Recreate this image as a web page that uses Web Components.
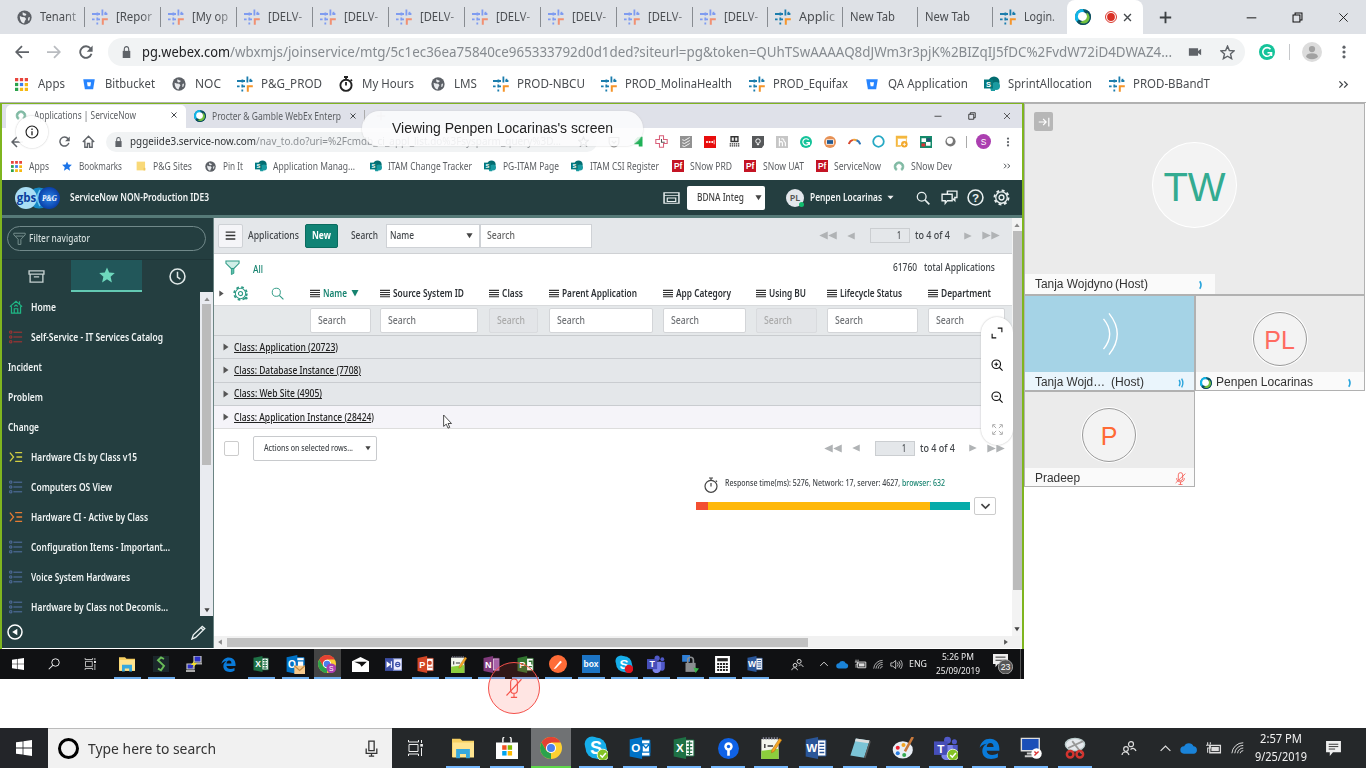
<!DOCTYPE html>
<html lang="en">
<head>
<meta charset="utf-8">
<title>Cisco Webex Meetings</title>
<style>
html,body{margin:0;padding:0;width:1366px;height:768px;overflow:hidden;background:#fff}
</style>
</head>
<body>
<meeting-page></meeting-page>
<script>
const BASE = `*{box-sizing:border-box}:host{display:block;font-family:"Noto Sans",sans-serif;color:#4a4d51}
.row{display:flex;align-items:center}.row>i{display:block;flex:none;font-style:normal;height:auto}
ui-icon{vertical-align:top}`;

/* text that occupies a fixed advance width */
customElements.define('ui-text', class extends HTMLElement {
  connectedCallback() {
    if (this.shadowRoot) return;
    const w = +this.getAttribute('w');
    this.attachShadow({mode:'open'}).innerHTML =
      `<style>:host{display:block;white-space:pre;width:${w}px;line-height:1.3}span{display:inline-block;transform-origin:0 50%;text-decoration:var(--deco,none);text-underline-offset:1px}</style><span><slot></slot></span>`;
    const s = this.shadowRoot.querySelector('span');
    const n = s.getBoundingClientRect().width;
    if (n && w) s.style.transform = `scaleX(${w / n})`;
  }
});

const office = (c, l, extra='') => `<path d="M8 2.2h7.2v11.6H8z" fill="#fff" stroke="${c}" stroke-width=".7"/>${extra}<path d="M0.5 1.8L9.5 0v16l-9-1.8z" fill="${c}"/><text x="5" y="11" font-size="8.5" font-weight="700" text-anchor="middle" fill="#fff">${l}</text>`;
const lines = c => `<path d="M10.5 4.5h3.5M10.5 6.8h3.5M10.5 9h3.5M10.5 11.3h3.5" stroke="${c}" stroke-width="1"/>`;
const snow = (a,b) => `<path d="M10.4.5v6M15.4 5h-3M5.4 3.6v2.8M0 5h8M0 10.3h2.6M5.3 8.5v3M5.3 13.5v2M5 10.3h3" stroke="${a}" stroke-width="1.8" fill="none"/><path d="M13.5 2.8v2.4" stroke="${a}" stroke-width="1.8"/><path d="M10.8 15.8v-5.6h5" fill="none" stroke="${b}" stroke-width="2"/>`;
const list = c => `<g fill="none" stroke="${c}"><path d="M5 2.5h10M5 8h10M5 13.5h10"/><path d="M.8 1.2h2.4v2.4H.8zM.8 6.8h2.4v2.4H.8zM.8 12.3h2.4v2.4H.8z" stroke-width=".9"/></g>`;
const slist = c => `<path d="M1 3l4.2 5L1 13M7 3h8M8.5 8H15M7 13h8" fill="none" stroke="${c}" stroke-width="1.5"/>`;
const wifi = `<g fill="none" stroke="#ddd" stroke-width="1.1"><path d="M1 14A13 13 0 0 1 14 2M4.3 14A9.7 9.7 0 0 1 14 5M7.5 14A6.6 6.6 0 0 1 14 8M10.5 14a3.6 3.6 0 0 1 3.5-3"/></g>`;
const chrome = `<circle cx="8" cy="8" r="8" fill="#fdd032"/><path d="M8 0a8 8 0 0 1 7 4H8L4.6 10 1.1 4A8 8 0 0 1 8 0z" fill="#e34133"/><path d="M1.1 4L4.6 10 8 12 8 16A8 8 0 0 1 1.1 4z" fill="#2ba24c"/><circle cx="8" cy="8" r="3.7" fill="#fff"/><circle cx="8" cy="8" r="2.9" fill="#4a80ee"/>`;
const skype = `<circle cx="5.4" cy="5.4" r="5" fill="#16aeea"/><circle cx="10.6" cy="10.6" r="5" fill="#16aeea"/><circle cx="8" cy="8" r="7" fill="#16aeea"/><text x="8" y="12.3" font-size="12" font-weight="700" text-anchor="middle" fill="#fff">S</text>`;
const teams = `<circle cx="9" cy="2.8" r="2.3" fill="#5059c9"/><circle cx="13.6" cy="3.8" r="1.7" fill="#5059c9"/><path d="M6 6h9.8v5a3 3 0 0 1-3 3z" fill="#5059c9"/><path d="M5 6h7.5v6a4 4 0 0 1-7.5 2z" fill="#7b83eb"/><path d="M0 3.6h9v9H0z" fill="#464eb8"/><text x="4.5" y="11" font-size="7.8" font-weight="700" text-anchor="middle" fill="#fff">T</text>`;
const check = `<circle cx="12.6" cy="12.6" r="3.8" fill="#84c225" stroke="#eef8d8" stroke-width=".6"/><path d="M10.8 12.7l1.4 1.4 2.4-2.8" fill="none" stroke="#fff" stroke-width="1"/>`;
const I = {
  globe:`<circle cx="8" cy="8" r="7.6" fill="#5c6066"/><path d="M3 6.5l2.5 1 2.8.2 1.4 1.8-1.2 2-1 2.8C5 14 3 11 3 6.5zM6 2.500c2 .5 2 1.500 4 1.700l-.6 1.600-2 .4L6 5zM12 8l1.800-.6-.6 3.400-1.600.6z" fill="#e8eaed"/>`,
  snow:snow('#1b7dad','#f5952b'), snowf:snow('#7f9cf0','#f19072'),
  webex:`<circle cx="8" cy="8" r="8" fill="#07596b"/><path d="M8 0A8 8 0 0 0 1.5 12.7L5 9.5 9 3z" fill="#11b5e8"/><path d="M12 1.2A8 8 0 0 1 8 16a8 8 0 0 1-5-1.7z" fill="#0c4a5c"/><path d="M12 3.5A6 6 0 0 1 5 13.5L9 11z" fill="#72c13f"/><circle cx="7.4" cy="7.4" r="4.5" fill="#fff"/>`,
  rec:`<circle cx="8" cy="8" r="7.3" fill="#fff" stroke="#d93025" stroke-width="1.3"/><circle cx="8" cy="8" r="5.2" fill="#d93025"/>`,
  x:`<path d="M3 3l10 10M13 3L3 13" stroke="#45494d" stroke-width="2" fill="none"/>`,
  xt:`<path d="M2 2l12 12M14 2L2 14" stroke="#111" stroke-width="1.3" fill="none"/>`,
  plus:`<path d="M8 1v14M1 8h14" stroke="#3c4043" stroke-width="2.3"/>`,
  plusf:`<path d="M8 1v14M1 8h14" stroke="#bbb" stroke-width="1.6"/>`,
  min:`<path d="M1 8.5h14" stroke="#111" stroke-width="1.4"/>`,
  rest:`<path d="M1.5 4.5h10v10h-10zM4.5 4.5v-3h10v10h-3" fill="none" stroke="#111" stroke-width="1.5"/>`,
  back:`<path d="M16 8H1.6M8 1.2L1.4 8 8 14.8" fill="none" stroke="#5f6368" stroke-width="2"/>`,
  fwd:`<path d="M0 8h14.4M8 1.2L14.6 8 8 14.8" fill="none" stroke="#b9bcc0" stroke-width="2"/>`,
  reload:`<path d="M13.2 4A6.6 6.6 0 1 0 14.3 10" fill="none" stroke="#5f6368" stroke-width="2.1"/><path d="M15.6.6v7H8.8z" fill="#5f6368"/>`,
  home:`<path d="M1 8.5L8 1.5l7 7M3.5 7v8h3.2v-4.6h2.6V15h3.2V7" fill="none" stroke="#5f6368" stroke-width="1.7"/>`,
  lock:`<path d="M2.5 6.5h11V16h-11z" fill="#5f6368"/><path d="M4.8 7V4a3.2 3.2 0 0 1 6.4 0v3" fill="none" stroke="#5f6368" stroke-width="1.7"/>`,
  cam:`<path d="M1 3h10.5v3.5L15 3.6v8.8l-3.5-3V13H1z" fill="#5f6368"/>`,
  star:`<path d="M8 1.2l2 4.7 5 .4-3.8 3.3 1.2 5L8 12l-4.4 2.6 1.2-5L1 6.3l5-.4z" fill="none" stroke="#5f6368" stroke-width="1.5"/>`,
  starb:`<path d="M8 .6l2.2 5 5.6.5-4.2 3.7 1.3 5.6L8 12.3l-4.9 3.1 1.3-5.6L.2 6.1l5.6-.5z" fill="#1a73e8"/>`,
  starg:`<path d="M8 .6l2.2 5 5.6.5-4.2 3.7 1.3 5.6L8 12.3l-4.9 3.1 1.3-5.6L.2 6.1l5.6-.5z" fill="#6ed8bd"/>`,
  gram:`<circle cx="8" cy="8" r="8" fill="#15c39a"/><path d="M11.5 5.3A4.3 4.3 0 1 0 12.3 9M8.5 8.8h4V12" fill="none" stroke="#fff" stroke-width="1.6"/>`,
  user:`<circle cx="8" cy="8" r="8" fill="#dcdcdc"/><circle cx="8" cy="5.6" r="2.5" fill="#a2a2a2"/><ellipse cx="8" cy="11.3" rx="4.6" ry="2.4" fill="#a2a2a2"/>`,
  dots:`<g fill="#5f6368"><circle cx="8" cy="2.5" r="1.8"/><circle cx="8" cy="8" r="1.8"/><circle cx="8" cy="13.5" r="1.8"/></g>`,
  apps:`<g><path d="M0 0h4v4H0zM6 0h4v4H6zM12 0h4v4h-4z" fill="#e8453c"/><path d="M0 6h4v4H0z" fill="#2ba24c"/><path d="M6 6h4v4H6z" fill="#3b7ded"/><path d="M12 6h4v4h-4zM6 12h4v4H6zM12 12h4v4h-4z" fill="#f5b912"/><path d="M0 12h4v4H0z" fill="#2ba24c"/></g>`,
  bit:`<path d="M.3 1.5h15.4L13.5 15h-11z" fill="#2684ff"/><path d="M5.3 5.5h5.4L9.8 11H6.2z" fill="#fff"/>`,
  watch:`<circle cx="8" cy="9.3" r="5.6" fill="none" stroke="#222" stroke-width="1.9"/><path d="M8 9.5V6M6 1h4M8 1v3M12.6 3.6l1.4 1.3" stroke="#222" stroke-width="1.8"/>`,
  watcht:`<circle cx="8" cy="9.3" r="6" fill="none" stroke="#444" stroke-width="1.2"/><path d="M8 9.5V6M6 1h4M8 1v2.5M12.8 3.6l1.2 1.1" stroke="#444" stroke-width="1.2"/>`,
  sp:`<circle cx="10" cy="6" r="5.5" fill="#036c70"/><circle cx="12" cy="10" r="4" fill="#1a9ba1"/><path d="M5 7h6v8H7z" fill="#1a9ba1"/><path d="M0 3.5h9v9H0z" fill="#03787c"/><text x="4.5" y="10.9" font-size="7.5" font-weight="700" text-anchor="middle" fill="#fff">S</text>`,
  more:`<path d="M2 3.5L6.5 8 2 12.5M9 3.5L13.5 8 9 12.5" fill="none" stroke="#45494d" stroke-width="1.9"/>`,
  fold:`<path d="M1 1h13.5v14H1z" fill="#f9d978"/><path d="M12 11h3v4h-3z" fill="#efc65c"/>`,
  pf:`<path d="M0 0h16v16H0z" fill="#c41424"/><text x="8" y="12.3" font-size="11" font-weight="700" text-anchor="middle" fill="#fff">Pf</text>`,
  ring:`<path d="M4 14a6.5 6.5 0 1 1 8 0l-1.5-2a4 4 0 1 0-5 0z" fill="#7db8a1" stroke="#7db8a1" stroke-width="1"/>`,
  pocket:`<path d="M1.5 2h13v6a6.5 6.5 0 0 1-13 0z" fill="none" stroke="#888" stroke-width="1.5"/><path d="M5 6.5l3 3 3-3" fill="none" stroke="#888" stroke-width="1.6"/>`,
  ever:`<path d="M9 1h5v13H9v-3H3V7z" fill="#1fb157"/><path d="M3 6l5-5v5z" fill="#1fb157"/>`,
  cross:`<path d="M5.5 1h5v4.5H15v5h-4.5V15h-5v-4.5H1v-5h4.5z" fill="#fff" stroke="#d9607a" stroke-width="1.3"/><path d="M8 5v4h4" stroke="#555" stroke-width="1.3" fill="none"/>`,
  todo:`<path d="M0 0h16v16H0z" fill="#929292"/><path d="M3 5l3 1 7-4M3 9l3 1 7-4M3 13l3 1 7-4" stroke="#fff" stroke-width="1.2" fill="none"/>`,
  last:`<path d="M0 0h16v16H0z" fill="#e80c0c"/><g fill="#fff"><circle cx="4" cy="8" r="1.4"/><circle cx="7.5" cy="8" r="1.4"/><circle cx="11" cy="8" r="1.4"/><path d="M13 5h1v6h-1z"/></g>`,
  film:`<path d="M2 0h12v9H2z" fill="#333"/><path d="M4 2h3v5H4zM9 2h3v5H9z" fill="#eee"/><path d="M1 11.500h14M1 14.500h14" stroke="#333" stroke-width="1.800" stroke-dasharray="2 1"/>`,
  bulb:`<path d="M0 0h16v12l-3 4H0z" fill="#56585a"/><circle cx="8" cy="6.8" r="3" fill="none" stroke="#fff" stroke-width="1.3"/><path d="M6.5 11.5h3" stroke="#fff" stroke-width="1.4"/>`,
  rh:`<path d="M0 0h16v16H0z" fill="#c6c6c6"/><path d="M4.500 2.500v11M4.500 9q2.500-3 4 0v4.500M7 4q4-1 3.500 2.500L12.500 9v4.500" fill="none" stroke="#fff" stroke-width="1.500"/>`,
  shot:`<circle cx="8" cy="8" r="8" fill="#e79155"/><path d="M3 4.5h10v7H3z" fill="#fff"/><path d="M4 5.5h8v5H4z" fill="#215a92"/>`,
  rain:`<path d="M1 11a7.5 7.5 0 0 1 5-5" stroke="#d7482f" stroke-width="2.5" fill="none"/><path d="M6 6a6 6 0 0 1 5 1" stroke="#f0a53a" stroke-width="2.5" fill="none"/><path d="M10.5 6.5a7 7 0 0 1 4.5 5" stroke="#2e77b8" stroke-width="2.5" fill="none"/>`,
  cring:`<circle cx="8" cy="8" r="6.5" fill="none" stroke="#27a9c4" stroke-width="2.2"/>`,
  note:`<path d="M1 1h14v3H1zM1 1h2v13H1zM1 13h6v1.5H1z" fill="#f4b73f"/><path d="M3 4h11v9H3z" fill="#fff" stroke="#f4b73f"/><circle cx="11.5" cy="11.5" r="4" fill="#f2a72a"/><path d="M11.5 9.5v4M9.5 11.5h4" stroke="#fff"/>`,
  tr:`<path d="M0 0h16v16H0z" fill="#158a6b"/><path d="M2 3h6v5H2zM8 8h6v5H8z" fill="#fff"/><path d="M9 3h5v4H9z" fill="#274f73"/><path d="M2 10h5v4H2z" fill="#d33"/>`,
  gray:`<circle cx="8" cy="8" r="7.4" fill="#777"/><circle cx="7" cy="7" r="4.5" fill="#fff"/>`,
  savatar:`<circle cx="8" cy="8" r="8" fill="#ab3fb0"/><text x="8" y="11.3" font-size="9" text-anchor="middle" fill="#fff">S</text>`,
  win:`<path d="M1 2h14v12H1z" fill="none" stroke="#e9f0f0" stroke-width="1.4"/><path d="M1 5h14M4 8h8v4H4z" stroke="#e9f0f0" stroke-width="1.1" fill="none"/>`,
  mag:`<circle cx="6.5" cy="6.5" r="5" fill="none" stroke="#e9f0f0" stroke-width="1.5"/><path d="M10.2 10.2L15.3 15.3" stroke="#e9f0f0" stroke-width="1.8"/>`,
  magg:`<circle cx="6.5" cy="6.5" r="5" fill="none" stroke="#2f9a85" stroke-width="1.2"/><path d="M10.2 10.2L15.3 15.3" stroke="#2f9a85" stroke-width="1.4"/>`,
  magl:`<circle cx="10" cy="6" r="5" fill="none" stroke="#eee" stroke-width="1.3"/><path d="M6.3 9.7L1 15" stroke="#eee" stroke-width="1.4"/>`,
  chat:`<path d="M6 5V2h9v6h-2v3l-2-2" fill="none" stroke="#e9f0f0" stroke-width="1.3"/><path d="M1 5h9.5v6H6l-2 2.5V11H1z" fill="#243e40" stroke="#e9f0f0" stroke-width="1.3"/>`,
  help:`<circle cx="8" cy="8" r="7" fill="none" stroke="#e9f0f0" stroke-width="1.5"/><text x="8" y="12" font-size="11" font-weight="700" text-anchor="middle" fill="#e9f0f0">?</text>`,
  gear:`<g fill="none" stroke="#e9f0f0"><circle cx="8" cy="8" r="6.6" stroke-width="1.8" stroke-dasharray="2.7 2.48"/><circle cx="8" cy="8" r="5.4" stroke-width="1.2"/><circle cx="8" cy="8" r="2.3" stroke-width="1.3"/></g>`,
  gearg:`<g fill="none" stroke="#2f9a85"><circle cx="8" cy="8" r="6.8" stroke-width="1.8" stroke-dasharray="2.8 2.54"/><circle cx="8" cy="8" r="5.5" stroke-width="1.1"/><circle cx="8" cy="8" r="2.2" stroke-width="1.2"/></g><circle cx="14" cy="13" r="1.5" fill="#2f9a85"/>`,
  filt:`<path d="M1 1.5h14v2L9.7 9v6.3H6.3V9L1 3.5z M3 5h10" fill="none" stroke="#78918f" stroke-width="1.2"/>`,
  filtg:`<path d="M1 1h14v2.5L9.5 9H6.5L1 3.5z" fill="#cfeee7" stroke="#2f9a85" stroke-width="1.1"/><path d="M6.8 9h2.6v5.2l-2.6 1.3z" fill="#5bc2ad" stroke="#2f9a85"/>`,
  arch:`<path d="M1 2h14v3.4H1zM2 5.4h12V14H2zM5.5 8.5h5" fill="none" stroke="#c4d0cf" stroke-width="1.3"/>`,
  clock:`<circle cx="8" cy="8" r="7" fill="none" stroke="#dfe8e7" stroke-width="1.5"/><path d="M8 3.5V8.5l2.7 2" fill="none" stroke="#dfe8e7" stroke-width="1.4"/>`,
  house:`<path d="M1 7.6L8 1.4l7 6.2M2.8 7v8h10.4V7M6 15v-5h4v5M6 7.5L8 5.7l2 1.8M12 4.5V1.5" fill="none" stroke="#1fb684" stroke-width="1.4"/>`,
  lr:list('#c9302f'), lb:list('#5d7bb8'), sy:slist('#d3cf42'), so:slist('#e57c33'),
  left:`<circle cx="8" cy="8" r="7" fill="none" stroke="#fff" stroke-width="1.5"/><path d="M10.3 4.8v6.4L5.2 8z" fill="#fff"/>`,
  pen:`<path d="M1 15l1.5-4.5L12 1.5l2.7 2.3L5 13.3z M10.5 3l2.6 2.4" fill="none" stroke="#e9f0f0" stroke-width="1.4"/>`,
  burger:`<path d="M0 2.4h16M0 6.2h16M0 10h16M0 13.8h16" stroke="#333" stroke-width="2"/>`,
  burger3:`<path d="M1 3h14M1 8h14M1 13h14" stroke="#333" stroke-width="2"/>`,
  tl:`<path d="M15.500 1v14L.5 8z" fill="#b0b3b5"/>`, tr2:`<path d="M.5 1v14L15.500 8z" fill="#b0b3b5"/>`,
  tdk:`<path d="M3 1v14L13 8z" fill="#555"/>`, tldk:`<path d="M13 1v14L3 8z" fill="#888"/>`,
  dn:`<path d="M1 3h14L8 14z" fill="#444"/>`, dng:`<path d="M1 2h14L8 15z" fill="#16836f"/>`, dnw:`<path d="M1 4h14L8 12z" fill="#eee"/>`,
  up:`<path d="M1 13h14L8 4z" fill="#888"/>`,
  chev:`<path d="M3 5l5 5 5-5" fill="none" stroke="#444" stroke-width="2"/>`,
  ex:`<path d="M9 1.500H14.500V7M1.500 9V14.500H7" fill="none" stroke="#111" stroke-width="1.5"/>`,
  zin:`<circle cx="7" cy="7" r="5.7" fill="none" stroke="#111" stroke-width="1.5"/><path d="M4.5 7h5M7 4.5v5M11 11l4.500 4.500" stroke="#111" stroke-width="1.5"/>`,
  zout:`<circle cx="7" cy="7" r="5.7" fill="none" stroke="#111" stroke-width="1.5"/><path d="M4.5 7h5M11 11l4.500 4.500" stroke="#111" stroke-width="1.5"/>`,
  full:`<path d="M1 5V1h4M11 1h4v4M15 11v4h-4M5 15H1v-4M2 2l4 4M14 2l-4 4M14 14l-4-4M2 14l4-4" fill="none" stroke="#999" stroke-width="1.2"/>`,
  info:`<circle cx="8" cy="8" r="6.8" fill="none" stroke="#222" stroke-width="1.3"/><path d="M8 7v4.6M8 4v1.7" stroke="#222" stroke-width="1.5"/>`,
  start:`<path d="M0 2.3L6.6 1.4v6.2H0zM7.4 1.3L16 0v7.6H7.4zM0 8.4h6.6v6.2L0 13.7zM7.4 8.4H16V16l-8.6-1.3z" fill="#fff"/>`,
  task:`<path d="M2 4.5h9v7H2zM1.5 0v2h10V0M1.5 16v-2h10v2" fill="none" stroke="#eee" stroke-width="1"/><path d="M14.5 0v3M14.5 8v8" stroke="#eee" stroke-width="1"/><path d="M13.3 4h2.6v2.6h-2.6z" fill="#eee"/>`,
  files:`<path d="M0 1.2h6l1.5 1.6H16v12H0z" fill="#f6cf62"/><path d="M.5 4H16v10.8H.5z" fill="#ffe48f"/><path d="M3 15.4V8.7h10v6.7h-2.8v-3H5.8v3z" fill="#37a8dd"/>`,
  sS:`<path d="M0 0h16v16H0z" fill="#1b272b"/><path d="M11 3L8 1.5 5 4.2l6 5.6-3 4.5-3-1.6" fill="none" stroke="#69bd58" stroke-width="1.9"/>`,
  putty:`<path d="M8 0h7v6H8zM1 8h7v5H1z" fill="#2c30c8" stroke="#c5c5c5" stroke-width="1.2"/><path d="M7 7.5h9M0 15h9" stroke="#aaa" stroke-width="1.8"/><path d="M9 4l-4 5h3l-2 4 5-6H8z" fill="#f6e22a"/>`,
  edge:`<path fill-rule="evenodd" d="M.5 7.500C1.300 3 4.400 .5 8.300 .5c4.600 0 7.200 3.200 7.200 7.600v1.600H5.800c.2 2.200 2 3.200 4.300 3.200 1.600 0 3-.4 4.300-1.200v3c-1.500 .9-3.300 1.300-5.200 1.300-4.100 0-6.700-2.400-6.700-6.100 0-2.500 1.300-4.500 3.400-5.600C3.600 4.600 1.600 5.600 .5 7.500zM5.900 6.800h5.200c0-1.900-.8-3-2.500-3-1.500 0-2.500 1.200-2.700 3z" fill="#0a7bd9"/>`,
  excel:office('#1e7145','X',`<path d="M10 4.5h4M10 7h4M10 9.5h4M10 12h4M12 3v10" stroke="#1e7145" stroke-width=".9"/>`),
  word:office('#2a5699','W',lines('#2a5699')), ppt:office('#d24625','P',`<circle cx="12" cy="6.5" r="2" fill="#d24625"/><path d="M10.5 10.5h4" stroke="#d24625"/>`),
  one:office('#80397b','N',`<path d="M10 3h5v10h-5z" fill="#a864a8"/>`), proj:office('#31752f','P',`<path d="M11 5h3v3M11 10h3" stroke="#31752f" stroke-width="1.3" fill="none"/>`),
  out:office('#0072c6','O',`<path d="M9.5 5h5.5v6H9.5zM9.5 5l2.8 3L15 5" fill="#fff" stroke="#0072c6"/>`),
  outm:office('#0072c6','O',`<path d="M9.5 5h5.5v6H9.5z" fill="#fff" stroke="#0072c6"/>`)+`<path d="M7 9h9v7H7z" fill="#f6c98b"/><path d="M7 9l4.5 4L16 9" fill="none" stroke="#c58b44"/>`,
  chrome, chromes:chrome+`<circle cx="11.8" cy="11.8" r="4.3" fill="#ab3fb0"/><text x="11.8" y="14" font-size="6" text-anchor="middle" fill="#fff">S</text>`,
  mail:`<path d="M0 5l8-4 8 4v10H0z" fill="#fff"/><path d="M2 5.5h12L9 10l-1.5-2.2z" fill="#111"/>`,
  mb:`<path d="M0 2h8v12H0z" fill="#3e50a8"/><path d="M8 2.5h8v11H8z" fill="#eef" stroke="#7080c0"/><path d="M1.500 5l4 3-4 3zM5.500 5h1v6h-1z" fill="#fff"/><circle cx="12" cy="8" r="2" fill="none" stroke="#3e50a8"/><path d="M10 8h4" stroke="#3e50a8"/>`,
  npp:`<path d="M1 1.5h12.5V16H1z" fill="#f4f7ee"/><path d="M1 10l12.5-1.5V16H1z" fill="#8ccf3d"/><path d="M3.5 5v3M5.5 6.5h4" stroke="#333" stroke-width="1"/><path d="M2 1h11" stroke="#889" stroke-width="1.5" stroke-dasharray="1 1"/><path d="M14.2 1l1.6 1.2-5.5 8.3-2 1 .4-2.2z" fill="#f5a623" stroke="#a86a10" stroke-width=".4"/>`,
  postman:`<circle cx="8" cy="8" r="8" fill="#ff6c37"/><path d="M4 12.5l6-7.5 1.5 1.3L6 12z" fill="#fff"/>`,
  box:`<path d="M0 0h16v16H0z" fill="#1c74c4"/><text x="8" y="10.8" font-size="7.5" font-weight="700" text-anchor="middle" fill="#fff">box</text>`,
  skyper:skype+`<circle cx="12.4" cy="12.4" r="3.8" fill="#e1141f"/>`, skypeg:skype+check, teams, teamsg:teams+check,
  lockg:`<path d="M1 0h7v6H1z" fill="#2f7fd6"/><path d="M4 7h9v8H4z" fill="#8b8e90"/><path d="M6 7V4.5a2.5 2.5 0 0 1 5 0V7" fill="none" stroke="#8b8e90" stroke-width="1.5"/><path d="M11 11l5 1-3 4z" fill="#3ab54a"/>`,
  calc:`<path d="M1 0h14v16H1z" fill="#fff"/><path d="M3 2h10v3H3z" fill="#222"/><path d="M3 7.5h10M3 10.3h10M3 13.2h10" stroke="#222" stroke-width="1.8" stroke-dasharray="1.9 .8"/>`,
  person:`<circle cx="10" cy="4.2" r="2.5" fill="none" stroke="#ddd" stroke-width="1.2"/><path d="M9.5 9.5C12 7.5 14 8.5 15 11M1 15c.5-4 6-4 7 0" fill="none" stroke="#ddd" stroke-width="1.2"/><circle cx="5" cy="9" r="2.3" fill="none" stroke="#ddd" stroke-width="1.2"/>`,
  caret:`<path d="M2 11l6-6 6 6" fill="none" stroke="#ddd" stroke-width="1.5"/>`,
  cloud:`<path d="M3.5 13a3.3 3.3 0 0 1 .2-6.6A4.5 4.5 0 0 1 12 6.5 3.3 3.3 0 0 1 12.5 13z" fill="#1a83d8"/>`,
  batt:`<path d="M4.5 5h10v7h-10z" fill="none" stroke="#ddd" stroke-width="1.2"/><path d="M6 6.5h7v4H6z" fill="#ddd"/><path d="M2.5 2v3M5 2v2M1 5h4v2.5H2.5V12" stroke="#ddd" fill="none"/>`, wifi,
  vol:`<path d="M1 6h2.5L7 3v10L3.5 10H1z" fill="none" stroke="#ddd"/><path d="M9 5.5q2 2.5 0 5M11 4q3 4 0 8M13 2.5q4 5.5 0 11" fill="none" stroke="#ddd"/>`,
  notif:`<path d="M1 1h14v10.5H7.5L4.5 15v-3.5H1z" fill="#eee"/><path d="M3.5 4h9M3.5 6.2h9M3.5 8.5h6" stroke="#333" stroke-width=".9"/>`,
  n23:`<path d="M0 0h12v8H4L2 10.5V8H0z" fill="#eee"/><path d="M2 2.5h8M2 5h8" stroke="#333" stroke-width=".8"/><circle cx="10" cy="10.3" r="5.7" fill="#555" stroke="#aaa" stroke-width=".7"/><text x="10" y="13" font-size="7" text-anchor="middle" fill="#fff">23</text>`,
  store:`<path d="M0 4h16v12H0z" fill="#fff"/><path d="M5 4V1.5a3 2.2 0 0 1 6 0V4" fill="none" stroke="#fff" stroke-width="1"/><path d="M4.5 6h3.2v3.3H4.5z" fill="#f25022"/><path d="M8.5 6h3.2v3.3H8.5z" fill="#7fba00"/><path d="M4.5 10.2h3.2v3.3H4.5z" fill="#00a4ef"/><path d="M8.5 10.2h3.2v3.3H8.5z" fill="#ffb900"/>`,
  maps:`<circle cx="8" cy="8" r="8" fill="#0f62e6"/><circle cx="8" cy="6.5" r="3.2" fill="#fff"/><circle cx="8" cy="6.5" r="1.3" fill="#0f62e6"/><path d="M7 9h2v4.5H7z" fill="#fff"/>`,
  npad:`<path d="M5 1l10 1.5L11 15 1 13.5z" fill="#7cc4d6"/><path d="M5 1l10 1.5-.7 2L4.3 3z" fill="#ddd"/><path d="M15 2.5l.8 1L12 15.500 11 15z" fill="#5a5a5a"/>`,
  paint:`<ellipse cx="7.5" cy="9" rx="7" ry="6" fill="#e9eef5"/><circle cx="4" cy="7.5" r="1.4" fill="#e23"/><circle cx="8" cy="5.5" r="1.4" fill="#f5a623"/><circle cx="4" cy="11.3" r="1.4" fill="#2a7de1"/><circle cx="8.5" cy="12.5" r="1.4" fill="#36a852"/><path d="M14.5 0L9 10" stroke="#c9793b" stroke-width="1.8"/>`,
  rdp:`<path d="M1 1h13v9H1z" fill="#1c4fb8" stroke="#ddd"/><path d="M5 12h5M3.5 14h8" stroke="#ccc" stroke-width="1.3"/><circle cx="12" cy="12" r="3.8" fill="#fff"/><path d="M10.5 10.5l1.5 1.5-1.5 1.5M13.5 10.5L12 12" stroke="#d33" fill="none"/>`,
  snip:`<ellipse cx="8" cy="5.5" rx="7" ry="4.5" fill="#e6e9ee" stroke="#bcc"/><path d="M3 8l11-5M6 3l7 9" stroke="#999" stroke-width="1.3"/><circle cx="4.5" cy="12.5" r="2.4" fill="none" stroke="#d3342f" stroke-width="1.8"/><circle cx="11.5" cy="12.5" r="2.4" fill="none" stroke="#d3342f" stroke-width="1.8"/>`,
  mic:`<path d="M5.5 1h5v9h-5z" fill="none" stroke="#333" stroke-width="1.2"/><path d="M3 8v4.5h10V8M8 12.5V15M5.5 15.2h5" fill="none" stroke="#333" stroke-width="1.2"/>`,
  muted:`<rect x="5.3" y=".8" width="5.4" height="9.8" rx="2.7" fill="none" stroke="#f5534a"/><path d="M3.3 7.5c0 3 1.5 4.7 4.7 4.7s4.7-1.7 4.7-4.7M8 12.2v3.2M5.5 15.5h5M14 2L2 13.5" fill="none" stroke="#f5534a"/>`,
  mutebig:`<rect x="5.3" y=".8" width="5.4" height="11.400" rx="2.7" fill="none" stroke="#f5534a" stroke-width=".9"/><path d="M8 12.200v3.200M5.500 15.500h5M14 1L2 14" fill="none" stroke="#f5534a" stroke-width=".9"/>`,
  cap:`<path d="M2 8h8M7 4.5L10.5 8 7 11.5M13.5 3v10" fill="none" stroke="#fff" stroke-width="1.3"/>`,
  wave1:`<path d="M6 2q4 6 0 12" fill="none" stroke="#2aa5dc" stroke-width="2.600"/>`,
  wave2:`<path d="M5 3q3 5 0 10M9 1q4 7 0 14" fill="none" stroke="#2aa5dc" stroke-width="2.200"/>`,
  speak:`<path d="M6 2.500q4.500 5.500 0 11M8 .5q6 7.500 0 15" fill="none" stroke="#fff" stroke-width=".5"/>`,
  arrow:`<path d="M3 0v13l3-2.6 2 4.6 2-.9L8 9.7h4z" fill="#fff" stroke="#222" stroke-width=".9"/>`
};
customElements.define('ui-icon', class extends HTMLElement {
  connectedCallback() {
    if (this.shadowRoot) return;
    const s = this.getAttribute('s') || 16, h = this.getAttribute('h') || s;
    this.attachShadow({mode:'open'}).innerHTML =
      `<style>:host{display:block;flex:none;width:${s}px;height:${h}px}svg{display:block;font-family:"Liberation Sans",sans-serif}</style><svg width="${s}" height="${h}" viewBox="0 0 16 16" ${h!==s?'preserveAspectRatio="none"':''}>${I[this.getAttribute('n')]||''}</svg>`;
  }
});
const ic = (n,s=16,h) => `<ui-icon n="${n}" s="${s}" ${h?`h="${h}"`:''}></ui-icon>`;
const tx = (w,t,c='') => `<ui-text w="${w}" class="${c}">${t}</ui-text>`;
/* flex row; every cell runs up to the start of the next one */
const row = (x0, items, cls='') => {
  const lead = items[0][0]-x0;
  return `<div class="row ${cls}" style="padding-left:${Math.max(0,lead)}px">` + items.map((it,i) => {
    const w = i < items.length-1 ? `width:${items[i+1][0]-it[0]}px` : '';
    return `<i style="${w}">${it[1]}</i>`;
  }).join('') + '</div>';
};
const at = (cx,n,s,h) => [cx-s/2, ic(n,s,h)];
const def = (name, css, html) => customElements.define(name, class extends HTMLElement {
  connectedCallback() {
    if (this.shadowRoot) return;
    this.attachShadow({mode:'open'}).innerHTML = `<style>${BASE}${css}</style>` + (typeof html === 'function' ? html(this) : html);
  }
});

/* ---------- outer browser ---------- */
const sep = '<b class="sep"></b>';
const fade = (w,t) => `<div class="fade">${tx(w,t)}</div>`;
let tabs = [[17,ic('globe',15)],[40,fade(36,'Tenant')]];
['[Repor','[My op','[DELV-','[DELV-','[DELV-','[DELV-','[DELV-','[DELV-','[DELV-'].forEach((t,i)=>{
  const x = 84+76*i;
  tabs.push([x,sep],[x+8,ic('snowf',16)],[x+32,fade(i>1?34:36,t)]);
});
tabs.push([767,sep],[775,ic('snow',16)],[799,fade(36,'Applic')],[842,sep],[850,tx(45,'New Tab')],[917,sep],[925,tx(45,'New Tab')],[992,sep],[1000,ic('snow',16)],[1024,fade(31,'Login.')],
 [1067,`<div class="active">${row(0,[[8,ic('webex',16)],[37.5,ic('rec',12)],[54.5,ic('x',11)]])}</div>`],[1158.5,ic('plus',13)],[1246,ic('min',11)],[1292,ic('rest',11)],[1338,ic('xt',11)]);
def('browser-tabs', `:host{height:34px;background:#dee1e6;font-size:12px}:host>.row{height:34px}.sep{display:block;width:1px;height:20px;background:#888c91}
.fade{-webkit-mask-image:linear-gradient(90deg,#000 55%,rgba(0,0,0,.15));}
.active{background:#fff;width:76px;height:34px;border-radius:8px 8px 0 0;display:flex;align-items:center}`, row(0,tabs));
def('browser-address', `:host{height:36px;background:#fff;font-size:14px}:host>.row{height:36px}.omni{width:1137px;height:28px;border-radius:14px;background:#f1f3f4}.omni .row{height:28px}.d{color:#202124}.p{color:#868b90}.v{display:block;width:1px;height:16px;background:#c6c8cb}`,
 row(0,[[15,ic('back',14)],[47,ic('fwd',14)],[79,ic('reload',14)],[108,`<div class="omni">${row(108,[[120.5,ic('lock',11,12)],[142,tx(88,'pg.webex.com','d')],[230,tx(942,'/wbxmjs/joinservice/mtg/5c1ec36ea75840ce965333792d0d1ded?siteurl=pg&amp;token=QUhTSwAAAAQ8dJWm3r3pjK%2BIZqIJ5fDC%2FvdW72iD4DWAZ4...','p')],[1188,ic('cam',14,12)],[1220,ic('star',15)]])}</div>`],[1259,ic('gram',16)],[1289,'<b class="v"></b>'],[1302,ic('user',20)],[1337,ic('dots',14)]]));
def('browser-bookmarks', `:host{height:32px;background:#fff;font-size:12px}:host>.row{height:28px}`,
 row(0,[[15,ic('apps',13)],[38,tx(27,'Apps')],[83,ic('bit',12)],[105,tx(50,'Bitbucket')],[172,ic('globe',14)],[195,tx(26,'NOC')],[237,ic('snow',16)],[261,tx(61,'P&amp;G_PROD')],[338,ic('watch',16)],[362,tx(52,'My Hours')],[431,ic('globe',14)],[454,tx(23,'LMS')],[493,ic('snow',16)],[517,tx(68,'PROD-NBCU')],[601,ic('snow',16)],[625,tx(107,'PROD_MolinaHealth')],[749,ic('snow',16)],[773,tx(75,'PROD_Equifax')],[866,ic('bit',12)],[888,tx(80,'QA Application')],[984,ic('sp',16)],[1008,tx(84,'SprintAllocation')],[1109,ic('snow',16)],[1133,tx(77,'PROD-BBandT')],[1338,ic('more',11)]]));

/* ---------- shared desktop: browser ---------- */
def('shared-browser', `:host{height:76px;background:#fff;color:#5c5f63}.tabs{height:24px;background:#dfe1e9}.tabs .row{height:22px}.act{background:#fff;width:180px;height:23px;border-radius:5px 5px 0 0;margin-top:1px}.act .row{height:20px}
.addr{height:27px}.omni{width:491px;height:20px;border-radius:10px;background:#f1f3f4}.omni .row{height:20px}.bm{height:25px;padding-bottom:3px}.d{color:#303336}.p{color:#8d9195}.v{display:block;width:1px;height:12px;background:#aaa}ui-text{font-size:10px}`,
 row(2,[[6,`<div class="act">${row(6,[[15,ic('ring',12)],[34,tx(102,'Applications | ServiceNow')],[170,ic('x',8)]])}</div>`],[194,ic('webex',12)],[212,tx(129,'Procter &amp; Gamble WebEx Enterp')],[349,ic('x',8)],[364,'<b class="v"></b>'],[376,ic('plusf',10)],[934,ic('min',8)],[968,ic('rest',8)],[1003,ic('xt',8)]],'tabs') +
 row(2,[at(17,'back',12),at(64,'reload',11),at(88,'home',13),[106,`<div class="omni">${row(106,[[113.5,ic('lock',9,10)],[130,tx(126,'pggeiide3.service-now.com','d')],[256,tx(305,'/nav_to.do?uri=%2Fcmdb_ci_appl_list.do%3Fsysparm_query%3D...','p')],[578,ic('star',11)]])}</div>`],
  at(614,'pocket',12),at(638,'ever',12),at(661.5,'cross',13),at(685.5,'todo',12),at(710,'last',12),at(734,'film',11),at(758,'bulb',12),at(782,'rh',12),at(806,'gram',12),at(830,'shot',12),at(854,'rain',13),at(878,'cring',13),at(901.5,'note',13),at(926,'tr',12),at(950,'gray',11),[966,'<b class="v"></b>'],at(983.5,'savatar',15),at(1008,'dots',10)],'addr') +
 row(2,[[11,ic('apps',11)],[29,tx(20,'Apps')],[62,ic('starb',10)],[79,tx(43,'Bookmarks')],[136,ic('fold',10)],[153,tx(39,'P&amp;G Sites')],[205,ic('globe',11)],[223,tx(20,'Pin It')],[255,ic('sp',12)],[273,tx(82,'Application Manag...')],[370,ic('sp',12)],[388,tx(84,'ITAM Change Tracker')],[484,ic('sp',12)],[503,tx(56,'PG-ITAM Page')],[571,ic('sp',12)],[590,tx(69,'ITAM CSI Register')],[672,ic('pf',12)],[690,tx(42,'SNow PRD')],[744,ic('pf',12)],[763,tx(41,'SNow UAT')],[816,ic('pf',12)],[834,tx(47,'ServiceNow')],[893,ic('ring',12)],[911,tx(41,'SNow Dev')],[1003,ic('more',8)]],'bm'));

def('snow-header', `:host{height:38px;background:#243e40;border-bottom:3px solid #567a78;font-size:10px;font-weight:600;color:#f3f6f6}:host>.row{height:35px}
.logo{display:block}.sel{background:#fff;width:78px;height:24px;border-radius:2px;color:#444;font-weight:500}.sel .row{height:24px}.av{display:flex;align-items:center;justify-content:center;position:relative;width:18px;height:18px;border-radius:50%;background:#e3e7ec;color:#555;font-size:9px}.av:after{content:"";position:absolute;right:0;bottom:0;width:5px;height:5px;border-radius:50%;background:#12bd6e}`,
 row(2,[[15,`<svg class="logo" width="45" height="22" viewBox="0 0 45 22"><defs><radialGradient id="a"><stop offset="0" stop-color="#2a86e8"/><stop offset="1" stop-color="#0a3fa8"/></radialGradient></defs><circle cx="24" cy="11" r="10.5" fill="#1688c4"/><circle cx="34" cy="11" r="11" fill="url(#a)"/><path d="M25 3q-5 8 0 16" stroke="#6fc8f2" fill="none" stroke-width="1.5"/><circle cx="11" cy="11" r="11" fill="#a9def5"/><text x="11.5" y="14.5" font-family="Open Sans" font-weight="700" font-size="11.5" text-anchor="middle" fill="#0b3f9d">gbs</text><text x="34.5" y="14" font-family="Liberation Serif" font-style="italic" font-weight="700" font-size="9" text-anchor="middle" fill="#fff" textLength="15" lengthAdjust="spacingAndGlyphs">P&amp;G</text></svg>`],[70,tx(139,'ServiceNow NON-Production IDE3')],[663,ic('win',17,14)],[687,`<div class="sel">${row(687,[[697,tx(47,'BDNA Integ')],[754.5,ic('dn',7)]])}</div>`],[786,'<div class="av">PL</div>'],[810,tx(72,'Penpen Locarinas')],[887,ic('dnw',7)],at(923,'mag',14),at(949,'chat',17),at(975,'help',17),at(1001,'gear',17)]));

const nav = [['house','Home',25],['lr','Self-Service - IT Services Catalog',132],['','Incident',34],['','Problem',35],['','Change',31],['sy','Hardware CIs by Class v15',106],['lb','Computers OS View',81],['so','Hardware CI - Active by Class',117],['lb','Configuration Items - Important...',139],['lb','Voice System Hardwares',99],['lb','Hardware by Class not Decomis...',137]];
def('snow-nav', `:host{width:212px;height:430px;background:#243e40;border-right:1px solid #6b8483;color:#f1f5f5;font-size:10px;font-weight:600;display:flex;flex-direction:column}
.f{margin:8px 0 0 5px;width:199px;height:25px;border:1px solid #71898a;border-radius:13px;color:#d3dddc;font-weight:500}.f .row{height:23px}
.t{display:grid;grid-template-columns:69px 71px 1fr;height:33px;margin-top:8px;border-top:1px solid #1e3537}.t>div{display:flex;align-items:center;justify-content:center}.t>.on{background:#22575a;border-bottom:2px solid #63c9b3}
.m{display:flex;height:324px}.l{width:198px;height:324px;overflow:hidden}.l>div{height:30px;display:flex;align-items:center;padding-left:5.5px}.l b{width:23px;padding-left:1px}
.sb{width:13px;background:#e9ebf0;padding:4px 2px 3px;display:flex;flex-direction:column;align-items:center}.sb div{width:9px;height:161px;margin:2px 0 auto;background:#bbb}
.b.row{height:32px}`,
 `<div class="f">${row(8,[[13,ic('filt',13)],[29,tx(61,'Filter navigator')]])}</div>
 <div class="t"><div>${ic('arch',17,15)}</div><div class="on">${ic('starg',16)}</div><div>${ic('clock',17)}</div></div>
 <div class="m"><div class="l">${nav.map(n=>`<div>${n[0]?`<b>${ic(n[0],14)}</b>`:''}${tx(n[2],n[1])}</div>`).join('')}</div><div class="sb">${ic('up',6)}<div></div>${ic('dn',6)}</div></div>
 ${row(2,[[7,ic('left',16)],[191,ic('pen',15)]],'b')}`);

const cols = [[310,'Name',24,61],[380,'Source System ID',71,98],[489,'Class',21,49],[549,'Parent Application',75,104],[663,'App Category',55,83],[756,'Using BU',37,61],[827,'Lifecycle Status',62,91],[928,'Department',50,77]];
let hd=[[218,ic('tdk',7)],[233,ic('gearg',15)],[271,ic('magg',13)]], sr=[];
cols.forEach((c,i)=>{hd.push([c[0],ic('burger',10,9)],[c[0]+13,tx(c[2],c[1],i?'':'g')]); if(!i) hd.push([351,ic('dng',8)]);
 sr.push([c[0],`<div class="in ${i===2||i===5?'dis':''}" style="width:${c[3]}px">${tx(28,'Search')}</div>`]);});
const pager = (d,cls) => [[819+d,ic('tl',9)],[828+d,ic('tl',9)],[847+d,ic('tl',8)],[870+d,`<div class="pg ${cls}">${tx(4,'1')}</div>`],[915+d,tx(35,'to 4 of 4')],[964+d,ic('tr2',8)],[982+d,ic('tr2',9)],[991+d,ic('tr2',9)]];
def('snow-list', `:host{width:808px;height:430px;background:#fff;font-size:10px;color:#43474b;display:grid;grid-template-columns:798px 10px;grid-template-rows:418px 12px;font-weight:500}
.tb{height:36px;background:#e4e7ea;border-bottom:1px solid #cfd1d4}.btn{height:24px;border-radius:2px;display:flex;align-items:center;justify-content:center}.h{width:25px;background:#f5f5f8;border:1px solid #cfd2d6}.new{width:33px;background:#108375;color:#fff;font-weight:700;border:1px solid #0b6b5f}
.s1,.s2{height:24px;background:#fff;border:1px solid #cfd2d6}.s1{width:94px}.s2{width:112px;color:#666}.s1 .row,.s2 .row{height:22px}
.pg{width:40px;height:15px;border:1px solid #cbced1;display:flex;align-items:center;padding-left:26px}.pg.k{background:#e4e7ea}
.r2{height:27px}.g{color:#16836f;font-weight:600}.r2 .g{padding-top:3px;font-weight:500}.r3{height:25px;border-bottom:1px solid #d8dadc;font-weight:600;color:#2c3034}
.r4{height:30px;background:#e5e8ea;border-bottom:1px solid #c9cccf}.in{height:25px;background:#fff;border:1px solid #d3d5d8;border-radius:2px;display:flex;align-items:center;padding-left:7px;color:#707377}.dis{background:#e3e5e8;color:#aaa;border-color:#d9dbde}
.gr{height:23.3px;background:#e4e7ea;border-bottom:1px solid #c9ccd0;display:flex;align-items:center;color:#222;gap:5px;padding-left:8px}.gr ui-text{--deco:underline}.gr ui-icon{margin-right:-1px}.gr:nth-of-type(8){background:#f5f4f9;border-color:#ddd}
.ac{height:38px}.cb{width:15px;height:15px;border:1px solid #ccc;border-radius:2px}.sel{width:124px;height:25px;border:1px solid #c8cacd;border-radius:2px;font-size:9px}.sel .row{height:23px}
.rs{height:25px;font-size:8.5px;margin-top:5px}.rs ui-text{margin-top:-5px}.rs .g{font-weight:500}.bar{display:flex;height:8px;width:274px}.bar b{display:block}.ex{width:22px;height:18px;border:1px solid #ccc;border-radius:2px;display:flex;align-items:center;justify-content:center}
.v{background:#f3f3f3;display:flex;flex-direction:column;align-items:center;padding:4px 0 4px}.v div{width:9px;height:359px;background:#bbb;margin:3px 0 auto}
.hz{background:#f1f1f1;display:flex;align-items:center;padding:0 3px}.hz div{width:581px;height:9px;background:#c1c1c1;margin:0 auto 0 4px}.c{background:#f1f1f1}`,
 `<div><div>${row(214,[[218,`<div class="btn h">${ic('burger3',11)}</div>`],[248,tx(51,'Applications')],[305,`<div class="btn new">${tx(19,'New')}</div>`],[351,tx(27,'Search')],[386,`<div class="s1">${row(387,[[390,tx(24,'Name')],[466,ic('dn',7)]])}</div>`],[480,`<div class="s2">${row(481,[[487,tx(28,'Search')]])}</div>`],...pager(0,'')],'tb')}</div>
 <div>${row(214,[[225,ic('filtg',15)],[253,tx(10,'All','g')],[893,tx(24,'61760')],[924,tx(71,'total Applications')]],'r2')}</div>
 <div>${row(214,hd,'r3')}</div><div>${row(214,sr,'r4')}</div>
 ${[['Class: Application (20723)',104],['Class: Database Instance (7708)',127],['Class: Web Site (4905)',88],['Class: Application Instance (28424)',140]].map(g=>`<div class="gr">${ic('tdk',8)}${tx(g[1],g[0])}</div>`).join('')}
 ${row(214,[[224,'<div class="cb"></div>'],[253,`<div class="sel">${row(254,[[264,tx(89,'Actions on selected rows...')],[365,ic('dn',6)]])}</div>`],...pager(5,'k')],'ac')}
 ${row(214,[[703,ic('watcht',16)],[725,tx(177,'Response time(ms): 5276, Network: 17, server: 4627, ')],[902,tx(43,'browser: 632','g')]],'rs')}
 ${row(214,[[696,'<div class="bar"><b style="width:12px;background:#f34f32"></b><b style="width:222px;background:#ffb80a"></b><b style="width:40px;background:#06aba9"></b></div>'],[974,`<div class="ex">${ic('chev',13)}</div>`]])}</div>
 <div class="v">${ic('up',6)}<div></div>${ic('dn',6)}</div>
 <div class="hz">${ic('tldk',6)}<div></div>${ic('tdk',6)}</div><div class="c"></div>`);

/* app strip: slots centred on their icons, with a running indicator */
const strip = (x0, apps, half) => row(x0, apps.map(a=>[a[0]-half, `<div class="app ${a[3]||''}" style="width:${half*2}px">${ic(a[1],a[2])}</div>`]));
def('shared-taskbar', `:host{height:30px;background:#101113;color:#eee;font-size:9px;display:flex;width:1022px}.row{height:30px}.app{height:30px;display:flex;align-items:center;justify-content:center;border-bottom:2px solid transparent;padding-top:2px}.u{border-color:#6cacec}.hl{background:#444;border-color:#6cacec}
.tm{font-size:9px}.tm ui-text+ui-text{margin:2px 0 0 -6px}.end{display:block;width:1px;height:30px;background:#555}`,
 strip(2,[[18,'start',12],[54,'magl',12],[90,'task',12],[127,'files',16,'u'],[161,'sS',16,'u'],[194,'putty',16],[228,'edge',15],[261,'excel',16,'u'],[295,'outm',19,'u'],[327,'chromes',18,'hl'],[360,'mail',17],[393,'mb',17],[425,'ppt',17,'u'],[458,'npp',17,'u'],[491,'one',17,'u'],[525,'proj',17,'u'],[558,'postman',18,'u'],[591,'box',18,'u'],[624,'skyper',18,'u'],[656,'teams',18,'u'],[690,'lockg',18,'u'],[722,'calc',17,'u'],[755,'word',16,'u']],13.5) +
 row(768.5,[at(797,'person',13),at(824,'caret',10),at(842,'cloud',13),at(860,'batt',13),at(878,'wifi',11),at(896,'vol',13),[909,tx(18,'ENG')],[942,`<div class="tm">${tx(32,'5:26 PM')}${tx(44,'25/09/2019')}</div>`],[993,ic('n23',20)],[1020,'<b class="end"></b>']]));

def('shared-screen', `:host{position:relative;width:1024px;height:576px}.top{border:solid #7fb51f;border-width:1px 2px 0;height:546px;width:1024px}.mid{display:flex;width:1020px}.bar{padding-left:2px;background:#101113}
.pill{position:absolute;left:362px;top:8px;width:281px;height:35px;border-radius:18px;background:rgba(252,252,253,.88);box-shadow:0 0 2px #ccc;display:flex;align-items:center;justify-content:center;font:14px "Liberation Sans",sans-serif;color:#222}
.info{position:absolute;left:16px;top:13px;width:32px;height:32px;border-radius:50%;background:rgba(255,255,255,.95);box-shadow:0 0 2px #bbb;display:flex;align-items:center;justify-content:center}
.zoom{position:absolute;left:981px;top:214px;width:32px;height:128px;border-radius:16px;background:#fff;box-shadow:0 0 2px #bbb;display:grid;grid-auto-rows:32px;place-items:center}
.cur{position:absolute;left:441px;top:312px}.mute{position:absolute;left:488px;top:559px;width:52px;height:52px;border-radius:50%;border:1px solid #f4504a;background:rgba(255,70,60,.14);display:flex;align-items:center;justify-content:center}`,
 `<div class="top"><shared-browser></shared-browser><snow-header></snow-header><div class="mid"><snow-nav></snow-nav><snow-list></snow-list></div></div><div class="bar"><shared-taskbar></shared-taskbar></div>
 <div class="info">${ic('info',14)}</div><div class="pill">${tx(221,"Viewing Penpen Locarinas's screen")}</div><div class="zoom">${ic('ex',12)}${ic('zin',12)}${ic('zout',12)}${ic('full',11)}</div><div class="cur">${ic('arrow',14)}</div><div class="mute">${ic('mutebig',20)}</div>`);

/* ---------- participants ---------- */
def('participant-tile', `:host{background:#ebebeb;outline:1px solid #b1b1b1;display:flex;flex-direction:column;font:12px "Liberation Sans",sans-serif;color:#333}
.a{flex:1;display:flex;align-items:center;justify-content:center;padding-top:10px;padding-right:1px}.c{width:54px;height:54px;border-radius:50%;border:1px solid #999;background:#f3f3f3;box-shadow:0 0 0 1px #fff;display:flex;align-items:center;justify-content:center;font-size:25px;color:var(--ink);padding-top:3px}
:host(.big) .c{width:85px;height:86px;border-color:#fff;font-size:40px;box-shadow:none;padding-top:5px}:host(.big) .a{padding:0 0 8px}.l{height:18px;background:#fafafa;padding:3px 0 0 10px;display:flex;align-items:center;flex:none}
:host(.big) .l{height:20px;width:190px;padding-top:2px}:host(.talk) .a{background:#a5d3e6;padding-top:0}:host(.talk) .l{background:#eaf5fc}`,
 el => `<div class="a">${el.classList.contains('talk')?ic('speak',44):`<div class="c">${el.getAttribute('who')}</div>`}</div><div class="l"><slot></slot></div>`);
def('participant-panel', `:host{width:342px;padding:1px 0 0 1px;position:relative}.g{display:grid;grid-template-columns:169px 168px;grid-template-rows:190px 94px 94px;gap:2px}.big{grid-column:1/3;--ink:#33ab91}
.tg{position:absolute;left:10px;top:9px;width:19px;height:19px;background:#b7b7b7;border-radius:2px;display:flex;align-items:center;justify-content:center}`,
 `<div class="g"><participant-tile class="big" who="TW">${tx(78,'Tanja Wojdyno')}<span style="width:2px"></span>${tx(33,'(Host)')}<span style="width:48px"></span>${ic('wave1',10)}</participant-tile>
 <participant-tile class="talk">${tx(70,'Tanja Wojd…')}<span style="width:6px"></span>${tx(33,'(Host)')}<span style="width:32px"></span>${ic('wave2',10)}</participant-tile>
 <participant-tile who="PL" style="--ink:#ff6b60"><span style="width:12px;margin-left:-6px">${ic('webex',12)}</span><span style="width:4px"></span>${tx(97,'Penpen Locarinas')}<span style="width:32px"></span>${ic('wave1',10)}</participant-tile>
 <participant-tile who="P" style="--ink:#ff6a35">${tx(45,'Pradeep')}<span style="width:94px"></span>${ic('muted',13)}</participant-tile></div><div class="tg">${ic('cap',14)}</div>`);

/* ---------- host taskbar ---------- */
def('host-taskbar', `:host{height:40px;background:#25282a;color:#fff;display:flex;font-size:12px}.st{width:48px;display:flex;align-items:center;justify-content:center;background:#232529}
.q{width:344px;background:#f1f1f1;border-top:1px solid #bbb;color:#333;font-size:14.5px}.q .row{height:39px}:host>.row{height:40px}.o{display:block;width:21px;height:21px;border:3px solid #000;border-radius:50%}
.app{height:40px;display:flex;align-items:center;justify-content:center;border-bottom:2px solid transparent;padding-top:2px}.u{border-color:#76b9ff}.hl{background:#707274;border-color:#5fd84b}.tm ui-text{font-size:12px;color:#f2f2f2}.tm ui-text:first-child{margin:0 0 2px 5px}`,
 `<div class="st">${ic('start',16)}</div><div class="q">${row(48,[[57.5,'<b class="o"></b>'],[88,tx(128,'Type here to search')],[363,ic('mic',17)]])}</div>` +
 row(392,[[407,ic('task',16)],...[[463,'files',22,'u'],[507,'store',22,'u'],[551,'chrome',22,'hl'],[596,'skypeg',24,'u'],[640,'out',22,'u'],[684,'excel',22,'u'],[728,'maps',21,'u'],[771,'npp',22,'u'],[816,'word',22,'u'],[860,'npad',22,'u'],[903,'paint',23,'u'],[946,'teamsg',24,'u'],[989,'edge',21,'u'],[1031,'rdp',22,'u'],[1075,'snip',22,'u']].map(a=>[a[0]-(a[3]==='hl'?20:17),`<div class="app ${a[3]}" style="width:${a[3]==='hl'?40:34}px">${ic(a[1],a[2])}</div>`]),
 at(1129,'person',16),at(1165,'caret',13),at(1189,'cloud',18),at(1213,'batt',17),at(1238,'wifi',14),[1255,`<div class="tm">${tx(42,'2:57 PM')}${tx(52,'9/25/2019')}</div>`],[1325,ic('notif',17)]]));

def('meeting-page', `:host{width:1366px;height:768px;background:#fff;display:flex;flex-direction:column;overflow:hidden}.line{height:1px;background:#b0b0b0}.stage{display:flex;height:625px;flex:none}browser-tabs,browser-address,browser-bookmarks,host-taskbar{flex:none}`,
 `<browser-tabs></browser-tabs><browser-address></browser-address><browser-bookmarks></browser-bookmarks><div class="line"></div><div class="stage"><shared-screen></shared-screen><participant-panel></participant-panel></div><host-taskbar></host-taskbar>`);
</script>
</body>
</html>
